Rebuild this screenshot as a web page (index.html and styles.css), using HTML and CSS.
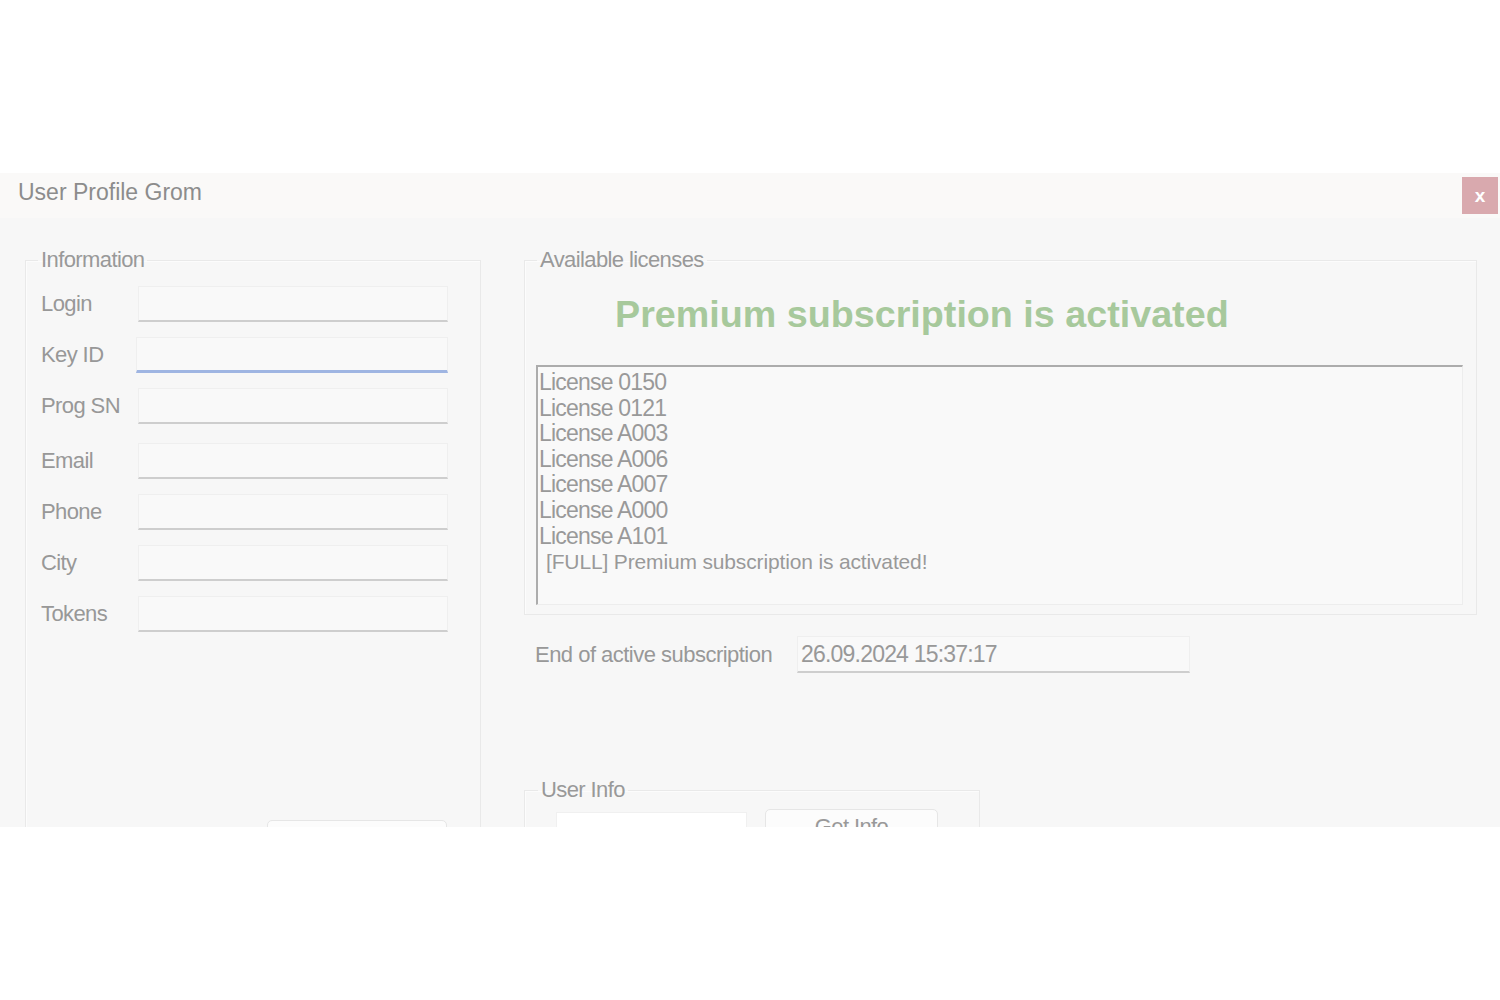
FILE: index.html
```html
<!DOCTYPE html>
<html lang="en">
<head>
<meta charset="utf-8">
<title>User Profile Grom</title>
<link rel="stylesheet" href="styles.css">
</head>
<body>
<div class="stage">
  <div class="window">
    <div class="titlebar">
      <div class="title">User Profile Grom</div>
      <div class="close">x</div>
    </div>
    <div class="content">
      <fieldset class="group info">
        <legend>Information</legend>
        <div class="row"><span class="lbl">Login</span><div class="tb"></div></div>
        <div class="row"><span class="lbl">Key ID</span><div class="tb focused"></div></div>
        <div class="row"><span class="lbl">Prog SN</span><div class="tb"></div></div>
        <div class="row row-gap"><span class="lbl">Email</span><div class="tb"></div></div>
        <div class="row"><span class="lbl">Phone</span><div class="tb"></div></div>
        <div class="row"><span class="lbl">City</span><div class="tb"></div></div>
        <div class="row"><span class="lbl">Tokens</span><div class="tb"></div></div>
        <div class="btn-row"><div class="btn save"></div></div>
      </fieldset>
      <div class="right">
        <fieldset class="group licenses">
          <legend>Available licenses</legend>
          <div class="premium">Premium subscription is activated</div>
          <div class="listbox">
            <div class="item">License 0150</div>
            <div class="item">License 0121</div>
            <div class="item">License A003</div>
            <div class="item">License A006</div>
            <div class="item">License A007</div>
            <div class="item">License A000</div>
            <div class="item">License A101</div>
            <div class="item full">[FULL] Premium subscription is activated!</div>
          </div>
        </fieldset>
        <div class="end-row">
          <span class="end-lbl">End of active subscription</span>
          <div class="tb date">26.09.2024 15:37:17</div>
        </div>
        <fieldset class="group userinfo">
          <legend>User Info</legend>
          <div class="ui-row">
            <div class="ui-input"></div>
            <div class="btn getinfo">Get Info</div>
          </div>
        </fieldset>
      </div>
    </div>
  </div>
</div>
</body>
</html>
```
FILE: styles.css
```css
html, body {
  margin: 0;
  padding: 0;
  background: #ffffff;
}

.stage {
  height: 1000px;
  padding-top: 173px;
  box-sizing: border-box;
  background: #ffffff;
}

.window {
  height: 654px;
  overflow: hidden;
  background: #f7f7f7;
  font-family: "Liberation Sans", Arial, sans-serif;
  color: #989898;
}

.titlebar {
  height: 45px;
  background: #faf9f8;
  display: flex;
  justify-content: space-between;
  align-items: flex-start;
}

.title {
  padding-left: 18px;
  font-size: 23px;
  line-height: 38px;
  color: #8c8c8c;
}

.close {
  margin-top: 4px;
  margin-right: 2px;
  width: 36px;
  height: 37px;
  background: #d9a9ae;
  color: #ffffff;
  font-size: 19px;
  font-weight: bold;
  display: flex;
  align-items: center;
  justify-content: center;
}

.content {
  display: flex;
  align-items: flex-start;
  gap: 43px;
  padding: 29px 0 0 25px;
}

.group {
  margin: 0;
  min-width: 0;
  box-sizing: border-box;
  border: 1px solid #e9e9e9;
  box-shadow: inset 1px 1px 0 #fcfcfc;
}

.group legend {
  font-size: 22px;
  line-height: 26px;
  letter-spacing: -0.6px;
  color: #999999;
  padding: 0 3px;
}

/* Information */
.info {
  width: 456px;
  height: 700px;
  padding: 13px 32px 0 15px;
}

.info legend {
  margin-left: -3px;
}

.row {
  display: flex;
  align-items: center;
  height: 36px;
  margin-bottom: 15px;
}

.row-gap {
  margin-top: 19px;
}

.lbl {
  width: 97px;
  flex: none;
  font-size: 22px;
  letter-spacing: -0.6px;
  color: #989898;
}

.tb {
  width: 310px;
  height: 36px;
  box-sizing: border-box;
  background: #f9f9f9;
  border: 1px solid #efefef;
  border-bottom: 2px solid #cecece;
}

.tb.focused {
  width: 314px;
  margin-left: -2px;
  border-bottom: 3px solid #9fb5e2;
}

.btn-row {
  display: flex;
  justify-content: flex-end;
  margin-top: 188px;
}

.btn {
  box-sizing: border-box;
  height: 36px;
  background: #fcfcfc;
  border: 1px solid #e6e6e6;
  border-radius: 5px;
}

.btn.save {
  width: 180px;
  margin-right: 1px;
}

/* Right column */
.right {
  width: 953px;
  flex: none;
}

.licenses {
  width: 953px;
  padding: 18px 13px 9px 11px;
}

.licenses legend {
  margin-left: 1px;
}

.premium {
  margin-left: 79px;
  height: 44px;
  font-size: 37.7px;
  line-height: 46px;
  font-weight: bold;
  color: #a7c99c;
  white-space: nowrap;
}

.listbox {
  margin-top: 30px;
  height: 240px;
  box-sizing: border-box;
  background: #f9f9f9;
  border-top: 2px solid #acacac;
  border-left: 2px solid #acacac;
  border-right: 1px solid #ededed;
  border-bottom: 1px solid #ededed;
  padding: 3px 0 0 1px;
}

.item {
  font-size: 23px;
  line-height: 25.6px;
  letter-spacing: -0.8px;
  color: #999999;
  white-space: nowrap;
}

.item.full {
  padding-left: 7px;
  font-size: 21px;
  letter-spacing: -0.15px;
}

.end-row {
  display: flex;
  align-items: center;
  margin-top: 21px;
  padding-left: 11px;
}

.end-lbl {
  width: 262px;
  flex: none;
  font-size: 22px;
  letter-spacing: -0.52px;
  color: #989898;
}

.tb.date {
  width: 393px;
  height: 37px;
  padding-left: 3px;
  font-size: 23px;
  line-height: 34px;
  letter-spacing: -0.8px;
  color: #989898;
}

.userinfo {
  width: 456px;
  height: 120px;
  margin-top: 104px;
  padding: 9px 0 0 31px;
}

.userinfo legend {
  margin-left: -18px;
}

.ui-row {
  display: flex;
  align-items: flex-start;
}

.ui-input {
  width: 191px;
  height: 36px;
  box-sizing: border-box;
  background: #ffffff;
  border: 1px solid #f0f0f0;
}

.btn.getinfo {
  width: 173px;
  margin-top: -3px;
  margin-left: 18px;
  text-align: center;
  font-size: 22px;
  line-height: 34px;
  letter-spacing: -0.6px;
  color: #999999;
}
```
